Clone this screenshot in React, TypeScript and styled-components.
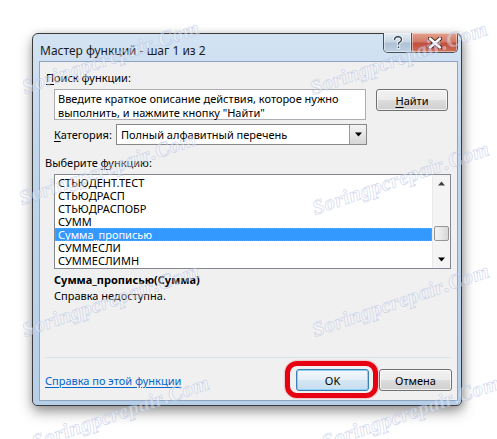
import React, { FC } from 'react';
import styled, { createGlobalStyle } from 'styled-components';

const UI_FONT = '"Noto Sans", "Open Sans", "DejaVu Sans", sans-serif';

const GlobalStyle = createGlobalStyle`
  html, body {
    margin: 0;
    padding: 0;
    background: #ffffff;
  }
  body {
    font-family: ${UI_FONT};
    font-size: 11px;
    color: #000;
  }
`;

const Page = styled.div`
  position: relative;
  width: 497px;
  height: 439px;
  overflow: hidden;
  padding: 33px 0 0 32px;
  box-sizing: border-box;
`;

const Window = styled.div`
  width: 430px;
  height: 373px;
  box-sizing: border-box;
  border: 1px solid #3b3b3b;
  border-radius: 6px 6px 5px 5px;
  background: linear-gradient(180deg, #d3e3f3 0%, #c0d6ec 30%, #b6cfe9 100%);
  box-shadow: 0 6px 14px rgba(0, 0, 0, 0.35), 2px 2px 8px rgba(0, 0, 0, 0.2);
  display: flex;
  flex-direction: column;
`;

const TitleBar = styled.div`
  height: 27px;
  display: flex;
  align-items: flex-start;
  padding-left: 7px;
`;

const Title = styled.div`
  flex: 1;
  font-size: 12px;
  line-height: 15px;
  margin-top: 9px;
  color: #1b1b1b;
  white-space: nowrap;
`;

const CaptionButtons = styled.div`
  display: flex;
  margin-top: -1px;
  margin-right: 3px;
  height: 19px;
  border: 1px solid #4b4f56;
  border-top: none;
  border-radius: 0 0 5px 5px;
  overflow: hidden;
`;

const CaptionButton = styled.div<{ $close?: boolean }>`
  width: ${p => (p.$close ? '46px' : '27px')};
  height: 100%;
  display: flex;
  align-items: center;
  justify-content: center;
  box-sizing: border-box;
  border-left: ${p => (p.$close ? '1px solid #4b4f56' : 'none')};
  background: ${p =>
    p.$close
      ? 'linear-gradient(180deg, #e4a28f 0%, #d07a66 45%, #c24f3d 55%, #cf6f55 100%)'
      : 'linear-gradient(180deg, #e6eef6 0%, #c8d6e4 45%, #afc2d6 55%, #bfd0e2 100%)'};
  box-shadow: inset 0 0 0 1px rgba(255, 255, 255, 0.45);
`;

const Client = styled.div`
  flex: 1;
  margin: 0 3px 4px 6px;
  border: 1px solid #8ea4bf;
  background: #f0f0f0;
  display: flex;
  flex-direction: column;
  padding: 8px 5px 0 5px;
`;

const Label = styled.div<{ $indent?: number }>`
  line-height: 15px;
  padding-left: ${p => p.$indent ?? 0}px;
  white-space: nowrap;
`;

const Key = styled.span`
  text-decoration: underline;
  text-underline-offset: 2px;
`;

const SearchRow = styled.div`
  display: flex;
  align-items: flex-start;
  margin-top: 4px;
  padding-left: 9px;
`;

const SearchBox = styled.div`
  width: 312px;
  height: 31px;
  box-sizing: border-box;
  border: 1px solid #abadb3;
  background: #fff;
  padding: 2px 3px;
  line-height: 14px;
  white-space: nowrap;
`;

const Button = styled.div<{ $default?: boolean; $width: number }>`
  width: ${p => p.$width}px;
  height: 22px;
  box-sizing: border-box;
  border: 1px solid ${p => (p.$default ? '#3c7fb1' : '#707070')};
  border-radius: 3px;
  background: ${p =>
    p.$default
      ? 'linear-gradient(180deg, #f2f7fb 0%, #e5eff7 49%, #d4e6f3 50%, #c6def0 100%)'
      : 'linear-gradient(180deg, #f2f2f2 0%, #ebebeb 49%, #dddddd 50%, #cfcfcf 100%)'};
  box-shadow: inset 0 0 0 1px ${p => (p.$default ? '#8ed0f5' : 'rgba(255,255,255,0.7)')};
  display: flex;
  align-items: center;
  justify-content: center;
  color: #000;
`;

const FindButton = styled(Button)`
  margin-left: 10px;
`;

const CategoryRow = styled.div`
  display: flex;
  align-items: center;
  margin-top: 4px;
  padding-left: 9px;
`;

const CategoryLabel = styled.span`
  width: 62px;
  white-space: nowrap;
`;

const Select = styled.div`
  width: 251px;
  height: 21px;
  box-sizing: border-box;
  border: 1px solid #878787;
  background: #fff;
  display: flex;
  align-items: center;
`;

const SelectValue = styled.div`
  flex: 1;
  padding-left: 4px;
  white-space: nowrap;
`;

const DropButton = styled.div`
  width: 17px;
  height: 19px;
  box-sizing: border-box;
  border-left: 1px solid #9a9a9a;
  background: linear-gradient(180deg, #f4f4f4 0%, #e6e6e6 50%, #d6d6d6 100%);
  display: flex;
  align-items: center;
  justify-content: center;
`;

const ListLabel = styled(Label)`
  margin-top: 10px;
`;

const ListBox = styled.div`
  margin: 4px 0 0 9px;
  width: 397px;
  height: 95px;
  box-sizing: border-box;
  border: 1px solid #828790;
  background: #fff;
  display: flex;
`;

const Items = styled.div`
  flex: 1;
  padding-top: 1px;
`;

const Item = styled.div<{ $selected?: boolean }>`
  height: 13px;
  line-height: 13px;
  padding-left: 3px;
  box-sizing: border-box;
  white-space: nowrap;
  background: ${p => (p.$selected ? '#3399ff' : 'transparent')};
  color: ${p => (p.$selected ? '#fff' : '#000')};
  outline: ${p => (p.$selected ? '1px dotted #c8925a' : 'none')};
  outline-offset: -1px;
`;

const ScrollBar = styled.div`
  width: 17px;
  background: #f4f4f4;
  border-left: 1px solid #eaeaea;
  display: flex;
  flex-direction: column;
  align-items: center;
`;

const ScrollArrow = styled.div`
  height: 17px;
  display: flex;
  align-items: center;
  justify-content: center;
`;

const ScrollTrack = styled.div`
  flex: 1;
  width: 100%;
  padding-top: 34px;
  box-sizing: border-box;
  display: flex;
  justify-content: center;
`;

const Thumb = styled.div`
  width: 15px;
  height: 15px;
  box-sizing: border-box;
  border: 1px solid #959595;
  border-radius: 2px;
  background: linear-gradient(90deg, #f3f3f3 0%, #e8e8e8 50%, #d6d6d6 100%);
`;

const FuncName = styled.div`
  margin: 3px 0 0 9px;
  font-weight: 700;
  line-height: 15px;
  white-space: nowrap;
`;

const FuncHelp = styled.div`
  margin: 1px 0 0 9px;
  line-height: 15px;
  white-space: nowrap;
`;

const Spacer = styled.div`
  flex: 1;
`;

const Separator = styled.div`
  height: 1px;
  background: #d6e1ea;
  margin-right: 1px;
`;

const Footer = styled.div`
  display: flex;
  align-items: center;
  height: 22px;
  margin: 11px 0 9px 0;
`;

const HelpLink = styled.a`
  flex: 1;
  color: #0066cc;
  text-decoration: underline;
  text-underline-offset: 2px;
  white-space: nowrap;
  cursor: pointer;
`;

const FocusWrap = styled.div`
  position: relative;
  margin-right: 10px;
`;

const Highlight = styled.div`
  position: absolute;
  left: -11px;
  right: -9px;
  top: -8px;
  bottom: -7px;
  border: 5px solid #e60012;
  border-radius: 12px;
  box-shadow: 0 0 2px rgba(230, 0, 18, 0.6);
  pointer-events: none;
`;

// watermark of the screenshot source, lying over the whole picture
const WatermarkLayer = styled.svg`
  position: absolute;
  left: 0;
  top: 0;
  pointer-events: none;

  text {
    font-family: "Liberation Serif", "DejaVu Serif", serif;
    font-style: italic;
    font-weight: 700;
    font-size: 21px;
    fill: rgba(255, 255, 255, 0.4);
    stroke: rgba(165, 180, 222, 0.5);
    stroke-width: 0.7px;
  }
`;

const functions = [
  'СТЬЮДЕНТ.ТЕСТ',
  'СТЬЮДРАСП',
  'СТЬЮДРАСПОБР',
  'СУММ',
  'Сумма_прописью',
  'СУММЕСЛИ',
  'СУММЕСЛИМН',
];

const WM_TEXT = 'Soringpcrepair.Com';
// rough advance widths (em) of the bold italic serif, one per letter
const WM_ADV = [0.56, 0.5, 0.39, 0.28, 0.56, 0.5, 0.5, 0.44, 0.39, 0.44, 0.5, 0.5, 0.28, 0.39, 0.25, 0.67, 0.5, 0.78];
const WM_SIZE = 21;
const WM_ANGLE = -19;

const watermarks = [
  { x: 25, y: 94 },
  { x: 313, y: 95 },
  { x: 22, y: 205 },
  { x: 315, y: 215 },
  { x: 25, y: 337 },
  { x: 315, y: 337 },
  { x: 35, y: 449 },
  { x: 325, y: 449 },
];

// each letter placed along the slanted line
const glyphPlaces = (x: number, y: number) => {
  const rad = (WM_ANGLE * Math.PI) / 180;
  let run = 0;
  const xs: string[] = [];
  const ys: string[] = [];
  WM_ADV.forEach(a => {
    xs.push((x + run * Math.cos(rad)).toFixed(1));
    ys.push((y + run * Math.sin(rad)).toFixed(1));
    run += a * WM_SIZE + 0.5;
  });
  return { x: xs.join(' '), y: ys.join(' ') };
};

const Arrow: FC<{ up?: boolean; size?: number }> = ({ up, size = 7 }) => (
  <svg width={size} height={Math.ceil(size / 2) + 1} viewBox="0 0 7 4">
    <path d={up ? 'M0 4 L3.5 0 L7 4 Z' : 'M0 0 L7 0 L3.5 4 Z'} fill={up ? '#404040' : '#000'} />
  </svg>
);

const App: FC = () => (
  <>
    <GlobalStyle />
    <Page>
      <Window>
        <TitleBar>
          <Title>Мастер функций - шаг 1 из 2</Title>
          <CaptionButtons>
            <CaptionButton>
              <svg width="10" height="13" viewBox="0 0 10 13">
                <path
                  d="M1.5 4 C1.5 1.5 3 0.8 5 0.8 C7 0.8 8.5 2 8.5 3.8 C8.5 5.6 6.8 6 5.5 7 L5.5 8.5"
                  fill="none"
                  stroke="#fff"
                  strokeWidth="3.2"
                />
                <path
                  d="M1.5 4 C1.5 1.5 3 0.8 5 0.8 C7 0.8 8.5 2 8.5 3.8 C8.5 5.6 6.8 6 5.5 7 L5.5 8.5"
                  fill="none"
                  stroke="#3a4656"
                  strokeWidth="1.4"
                />
                <rect x="4.3" y="10" width="2.4" height="2.4" fill="#3a4656" stroke="#fff" strokeWidth="0.8" />
              </svg>
            </CaptionButton>
            <CaptionButton $close>
              <svg width="14" height="12" viewBox="0 0 14 12">
                <path d="M2 1.5 L12 10.5 M12 1.5 L2 10.5" stroke="#4a2a26" strokeWidth="4.4" strokeLinecap="round" />
                <path d="M2 1.5 L12 10.5 M12 1.5 L2 10.5" stroke="#ffffff" strokeWidth="2.4" strokeLinecap="round" />
              </svg>
            </CaptionButton>
          </CaptionButtons>
        </TitleBar>
        <Client>
          <Label $indent={1}>
            <Key>П</Key>оиск функции:
          </Label>
          <SearchRow>
            <SearchBox>
              Введите краткое описание действия, которое нужно
              <br />
              выполнить, и нажмите кнопку "Найти"
            </SearchBox>
            <FindButton $width={72}>
              <span>
                <Key>Н</Key>айти
              </span>
            </FindButton>
          </SearchRow>
          <CategoryRow>
            <CategoryLabel>
              <Key>К</Key>атегория:
            </CategoryLabel>
            <Select>
              <SelectValue>Полный алфавитный перечень</SelectValue>
              <DropButton>
                <Arrow />
              </DropButton>
            </Select>
          </CategoryRow>
          <ListLabel>
            Выберите <Key>ф</Key>ункцию:
          </ListLabel>
          <ListBox>
            <Items>
              {functions.map(name => (
                <Item key={name} $selected={name === 'Сумма_прописью'}>
                  {name}
                </Item>
              ))}
            </Items>
            <ScrollBar>
              <ScrollArrow>
                <Arrow up />
              </ScrollArrow>
              <ScrollTrack>
                <Thumb />
              </ScrollTrack>
              <ScrollArrow>
                <Arrow />
              </ScrollArrow>
            </ScrollBar>
          </ListBox>
          <FuncName>Сумма_прописью(Сумма)</FuncName>
          <FuncHelp>Справка недоступна.</FuncHelp>
          <Spacer />
          <Separator />
          <Footer>
            <HelpLink>Справка по этой функции</HelpLink>
            <FocusWrap>
              <Button $default $width={73}>OK</Button>
              <Highlight />
            </FocusWrap>
            <Button $width={73}>Отмена</Button>
          </Footer>
        </Client>
      </Window>
      <WatermarkLayer width="497" height="439" viewBox="0 0 497 439">
        {watermarks.map((w, i) => {
          const g = glyphPlaces(w.x, w.y);
          return (
            <text key={i} x={g.x} y={g.y} rotate={String(WM_ANGLE)}>
              {WM_TEXT}
            </text>
          );
        })}
      </WatermarkLayer>
    </Page>
  </>
);

export default App;
